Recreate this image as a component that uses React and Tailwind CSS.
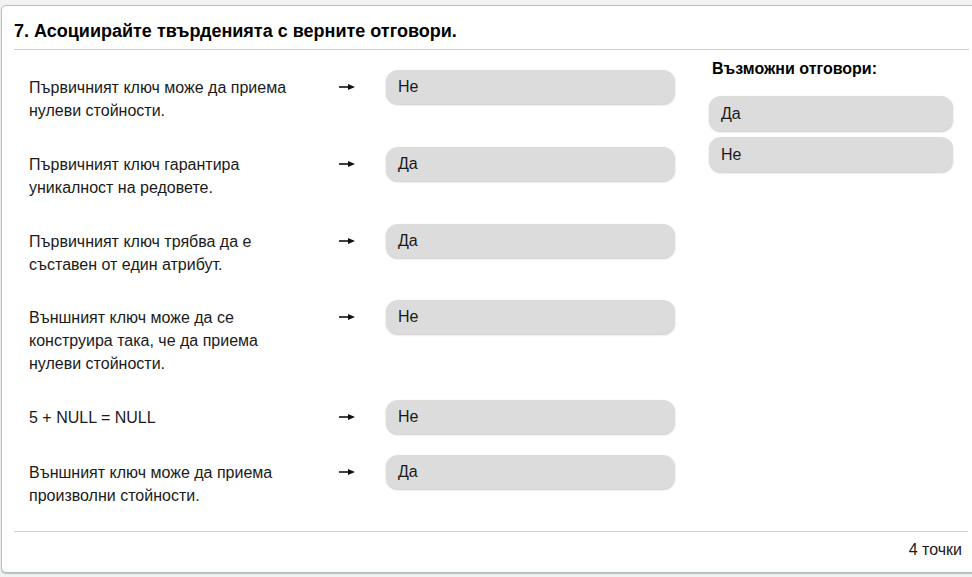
import React from "react";

const rows = [
  { text: "Първичният ключ може да приема нулеви стойности.", ans: "Не" },
  { text: "Първичният ключ гарантира уникалност на редовете.", ans: "Да" },
  { text: "Първичният ключ трябва да е съставен от един атрибут.", ans: "Да" },
  { text: "Външният ключ може да се конструира така, че да приема нулеви стойности.", ans: "Не" },
  { text: "5 + NULL = NULL", ans: "Не" },
  { text: "Външният ключ може да приема произволни стойности.", ans: "Да" },
];

function Arrow() {
  return (
    <svg width="16" height="8" viewBox="0 0 16 8" className="block">
      <line x1="0" y1="4" x2="10" y2="4" stroke="#111" strokeWidth="1.6" />
      <polygon points="9,1 16,4 9,7" fill="#111" />
    </svg>
  );
}

export default function App() {
  return (
    <div
      className="w-[972px] h-[577px] overflow-hidden bg-[#f2f2f2] pt-[5px] pl-[1px] text-[#1a1a1a]"
      style={{ fontFamily: '"Liberation Sans", Arial, sans-serif' }}
    >
      <div className="w-[981px] h-[568px] bg-white border border-[#b5c1c1] rounded-[5px] shadow-[0_1px_1px_rgba(120,140,140,0.5)] px-[12px] flex flex-col">
        <div className="pt-[15px] pb-[8px] border-b border-[#cfcfcf] leading-[20px] text-[18px] font-bold text-black">
          7. Асоциирайте твърденията с верните отговори.
        </div>
        <div className="flex pt-[20px]">
          <div className="flex flex-col gap-[20.75px] w-[661px]">
            {rows.map((r, i) => (
              <div key={i} className="flex items-start">
                <div className="w-[325px] pl-[15px] pr-[30px] pt-[6px] pb-[4px] text-[16px] leading-[23px]">
                  {r.text}
                </div>
                <div className="w-[16px] mt-[13px]">
                  <Arrow />
                </div>
                <div className="ml-[31px] w-[289px] h-[34px] rounded-[12px] bg-[#dcdcdc] shadow-[0_1px_2px_rgba(0,0,0,0.22)] px-[12px] flex items-center text-[16px]">
                  {r.ans}
                </div>
              </div>
            ))}
          </div>
          <div className="ml-[34px] w-[244px] -mt-[11px]">
            <div className="text-[16px] font-bold leading-[20px] pl-[3px] text-black">
              Възможни отговори:
            </div>
            <div className="mt-[17px] flex flex-col gap-[6px]">
              {["Да", "Не"].map((a) => (
                <div
                  key={a}
                  className="h-[35px] rounded-[12px] bg-[#dcdcdc] shadow-[0_1px_2px_rgba(0,0,0,0.22)] px-[12px] flex items-center text-[16px]"
                >
                  {a}
                </div>
              ))}
            </div>
          </div>
        </div>
        <div className="mt-[20px] w-[954px] border-t border-[#cfcfcf] pt-[8px] text-right pr-[6px] text-[16px] leading-[20px]">
          4 точки
        </div>
      </div>
    </div>
  );
}
